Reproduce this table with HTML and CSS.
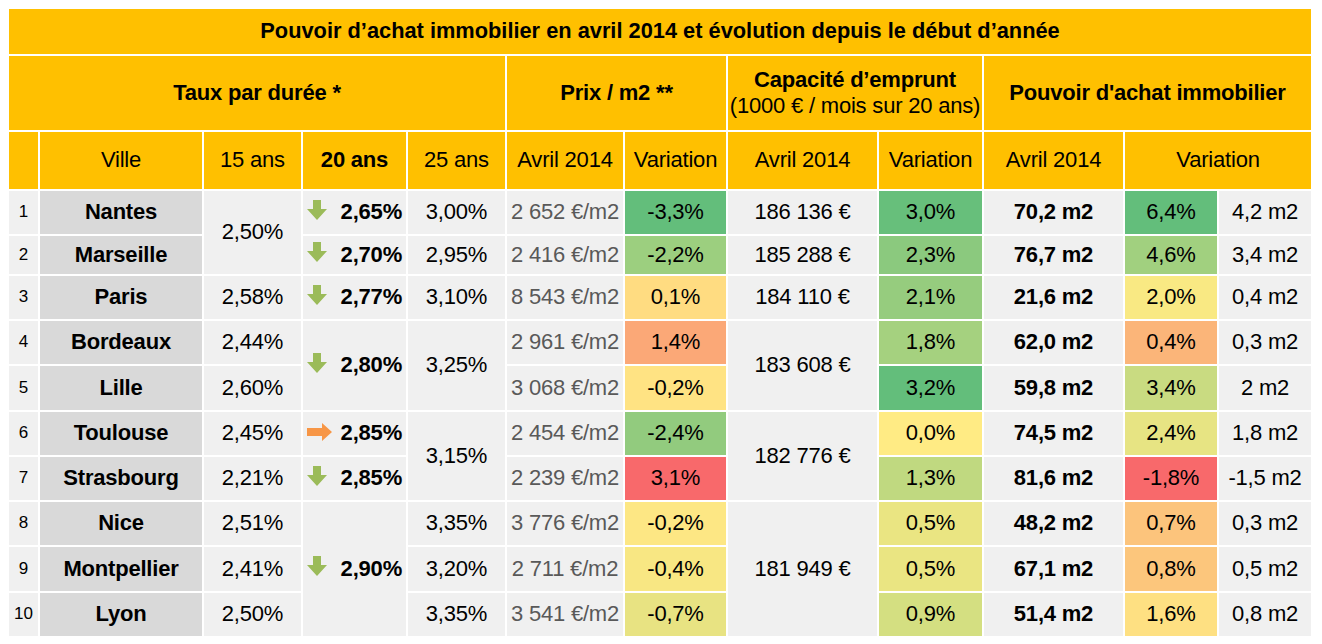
FILE: index.html
```html
<!DOCTYPE html>
<html lang="fr">
<head>
<meta charset="utf-8">
<title>Pouvoir d’achat immobilier</title>
<link rel="stylesheet" href="styles.css">
</head>
<body>
<table class="grid">
  <colgroup>
    <col class="w-num"><col class="w-ville"><col class="w-15"><col class="w-20"><col class="w-25">
    <col class="w-prix"><col class="w-pvar"><col class="w-cap"><col class="w-cvar">
    <col class="w-pa"><col class="w-pavar"><col class="w-m2">
  </colgroup>
  <thead>
    <tr class="h-title"><th colspan="12" class="title">Pouvoir d’achat immobilier en avril 2014 et évolution depuis le début d’année</th></tr>
    <tr class="h-group">
      <th colspan="5" class="grp">Taux par durée *</th>
      <th colspan="2" class="grp">Prix / m2 **</th>
      <th colspan="2" class="grp"><span class="grp-main">Capacité d’emprunt</span><span class="grp-sub">(1000 € / mois sur 20 ans)</span></th>
      <th colspan="3" class="grp">Pouvoir d'achat immobilier</th>
    </tr>
    <tr class="h-sub">
      <th></th>
      <th>Ville</th>
      <th>15 ans</th>
      <th class="bold">20 ans</th>
      <th>25 ans</th>
      <th>Avril 2014</th>
      <th>Variation</th>
      <th>Avril 2014</th>
      <th>Variation</th>
      <th>Avril 2014</th>
      <th colspan="2">Variation</th>
    </tr>
  </thead>
  <tbody>
    <tr class="r43">
      <td class="num">1</td><td class="city">Nantes</td>
      <td rowspan="2">2,50%</td>
      <td><div class="rate"><svg class="down" viewBox="0 0 20 20"><polygon points="6,0 14,0 14,9 20,9 10,20 0,9 6,9"/></svg><span>2,65%</span></div></td>
      <td>3,00%</td>
      <td class="prix">2 652 €/m2</td><td class="c63be7b">-3,3%</td>
      <td>186 136 €</td><td class="c67bf7b">3,0%</td>
      <td class="bold">70,2 m2</td><td class="c63be7b">6,4%</td><td>4,2 m2</td>
    </tr>
    <tr class="r38">
      <td class="num">2</td><td class="city">Marseille</td>
      <td><div class="rate"><svg class="down" viewBox="0 0 20 20"><polygon points="6,0 14,0 14,9 20,9 10,20 0,9 6,9"/></svg><span>2,70%</span></div></td>
      <td>2,95%</td>
      <td class="prix">2 416 €/m2</td><td class="c9ccf7f">-2,2%</td>
      <td>185 288 €</td><td class="c8bc97e">2,3%</td>
      <td class="bold">76,7 m2</td><td class="ca1d07f">4,6%</td><td>3,4 m2</td>
    </tr>
    <tr class="r43">
      <td class="num">3</td><td class="city">Paris</td>
      <td>2,58%</td>
      <td><div class="rate"><svg class="down" viewBox="0 0 20 20"><polygon points="6,0 14,0 14,9 20,9 10,20 0,9 6,9"/></svg><span>2,77%</span></div></td>
      <td>3,10%</td>
      <td class="prix">8 543 €/m2</td><td class="cffdc81">0,1%</td>
      <td>184 110 €</td><td class="c96cc7e">2,1%</td>
      <td class="bold">21,6 m2</td><td class="cf9e983">2,0%</td><td>0,4 m2</td>
    </tr>
    <tr class="r43">
      <td class="num">4</td><td class="city">Bordeaux</td>
      <td>2,44%</td>
      <td rowspan="2"><div class="rate"><svg class="down" viewBox="0 0 20 20"><polygon points="6,0 14,0 14,9 20,9 10,20 0,9 6,9"/></svg><span>2,80%</span></div></td>
      <td rowspan="2">3,25%</td>
      <td class="prix">2 961 €/m2</td><td class="cfba877">1,4%</td>
      <td rowspan="2">183 608 €</td><td class="ca5d17f">1,8%</td>
      <td class="bold">62,0 m2</td><td class="cfbb579">0,4%</td><td>0,3 m2</td>
    </tr>
    <tr class="r44">
      <td class="num">5</td><td class="city">Lille</td>
      <td>2,60%</td>
      <td class="prix">3 068 €/m2</td><td class="cffe383">-0,2%</td>
      <td class="c63be7b">3,2%</td>
      <td class="bold">59,8 m2</td><td class="cc9db81">3,4%</td><td>2 m2</td>
    </tr>
    <tr class="r43">
      <td class="num">6</td><td class="city">Toulouse</td>
      <td>2,45%</td>
      <td><div class="rate"><svg class="right" viewBox="0 0 25 18"><polygon points="0,5 15,5 15,0 25,9 15,18 15,13 0,13"/></svg><span>2,85%</span></div></td>
      <td rowspan="2">3,15%</td>
      <td class="prix">2 454 €/m2</td><td class="c92cb7e">-2,4%</td>
      <td rowspan="2">182 776 €</td><td class="cffeb84">0,0%</td>
      <td class="bold">74,5 m2</td><td class="ce7e483">2,4%</td><td>1,8 m2</td>
    </tr>
    <tr class="r43">
      <td class="num">7</td><td class="city">Strasbourg</td>
      <td>2,21%</td>
      <td><div class="rate"><svg class="down" viewBox="0 0 20 20"><polygon points="6,0 14,0 14,9 20,9 10,20 0,9 6,9"/></svg><span>2,85%</span></div></td>
      <td class="prix">2 239 €/m2</td><td class="cf8696b">3,1%</td>
      <td class="cc0d980">1,3%</td>
      <td class="bold">81,6 m2</td><td class="cf8696b">-1,8%</td><td>-1,5 m2</td>
    </tr>
    <tr class="r43">
      <td class="num">8</td><td class="city">Nice</td>
      <td>2,51%</td>
      <td rowspan="3"><div class="rate"><svg class="down" viewBox="0 0 20 20"><polygon points="6,0 14,0 14,9 20,9 10,20 0,9 6,9"/></svg><span>2,90%</span></div></td>
      <td>3,35%</td>
      <td class="prix">3 776 €/m2</td><td class="cfde784">-0,2%</td>
      <td rowspan="3">181 949 €</td><td class="ceae582">0,5%</td>
      <td class="bold">48,2 m2</td><td class="cfcc47c">0,7%</td><td>0,3 m2</td>
    </tr>
    <tr class="r44">
      <td class="num">9</td><td class="city">Montpellier</td>
      <td>2,41%</td>
      <td>3,20%</td>
      <td class="prix">2 711 €/m2</td><td class="cf8e783">-0,4%</td>
      <td class="ceae582">0,5%</td>
      <td class="bold">67,1 m2</td><td class="cfcc67c">0,8%</td><td>0,5 m2</td>
    </tr>
    <tr class="r43">
      <td class="num">10</td><td class="city">Lyon</td>
      <td>2,50%</td>
      <td>3,35%</td>
      <td class="prix">3 541 €/m2</td><td class="ce8e382">-0,7%</td>
      <td class="cd4df81">0,9%</td>
      <td class="bold">51,4 m2</td><td class="cfee082">1,6%</td><td>0,8 m2</td>
    </tr>
  </tbody>
</table>
</body>
</html>
```
FILE: styles.css
```css
html, body {
  background: #ffffff;
}
body {
  margin: 7px;
  font-family: "Liberation Sans", Arial, sans-serif;
  font-size: 22px;
  letter-spacing: -0.2px;
  color: #000000;
}
.grid {
  border-collapse: separate;
  border-spacing: 2px;
  table-layout: fixed;
  width: 1306px;
}
.w-num { width: 29px; }
.w-ville { width: 162px; }
.w-15 { width: 97px; }
.w-20 { width: 103px; }
.w-25 { width: 97px; }
.w-prix { width: 116px; }
.w-pvar { width: 101px; }
.w-cap { width: 149px; }
.w-cvar { width: 103px; }
.w-pa { width: 139px; }
.w-pavar { width: 92px; }
.w-m2 { width: 92px; }

.grid th, .grid td {
  padding: 0;
  text-align: center;
  vertical-align: middle;
  white-space: nowrap;
  overflow: hidden;
  line-height: 1.2;
}
.grid th {
  background: #ffc000;
  font-weight: normal;
}
.grid td {
  background: #f0f0f0;
}

.h-title th { height: 45px; }
.grid th.title {
  font-weight: bold;
  font-size: 21.8px;
  letter-spacing: 0;
}
.h-group th { height: 74px; }
.grid th.grp {
  font-weight: bold;
}
.grp-main, .grp-sub {
  display: block;
}
.grp-sub {
  font-weight: normal;
}
.h-sub th { height: 57px; }
.grid th.bold, .grid td.bold { font-weight: bold; }

.r43 td { height: 43px; }
.r38 td { height: 38px; }
.r44 td { height: 44px; }

.grid td.num {
  font-size: 17px;
  letter-spacing: 0;
}
.grid td.city {
  background: #d9d9d9;
  font-weight: bold;
}
.grid td.prix {
  color: #595959;
}

.rate {
  display: flex;
  align-items: center;
  justify-content: space-between;
  padding: 0 4px 0 4px;
  font-weight: bold;
}
.down {
  flex: none;
  width: 20px;
  height: 20px;
  fill: #9bbb59;
  margin-top: -5px;
}
.right {
  flex: none;
  width: 25px;
  height: 18px;
  fill: #f79646;
  margin-top: -2px;
}

.c63be7b { background: #63be7b !important; }
.c67bf7b { background: #67bf7b !important; }
.c9ccf7f { background: #9ccf7f !important; }
.c8bc97e { background: #8bc97e !important; }
.ca1d07f { background: #a1d07f !important; }
.cffdc81 { background: #ffdc81 !important; }
.c96cc7e { background: #96cc7e !important; }
.cf9e983 { background: #f9e983 !important; }
.cfba877 { background: #fba877 !important; }
.ca5d17f { background: #a5d17f !important; }
.cfbb579 { background: #fbb579 !important; }
.cffe383 { background: #ffe383 !important; }
.cc9db81 { background: #c9db81 !important; }
.c92cb7e { background: #92cb7e !important; }
.cffeb84 { background: #ffeb84 !important; }
.ce7e483 { background: #e7e483 !important; }
.cf8696b { background: #f8696b !important; }
.cc0d980 { background: #c0d980 !important; }
.cfde784 { background: #fde784 !important; }
.ceae582 { background: #eae582 !important; }
.cfcc47c { background: #fcc47c !important; }
.cf8e783 { background: #f8e783 !important; }
.cfcc67c { background: #fcc67c !important; }
.ce8e382 { background: #e8e382 !important; }
.cd4df81 { background: #d4df81 !important; }
.cfee082 { background: #fee082 !important; }
```
